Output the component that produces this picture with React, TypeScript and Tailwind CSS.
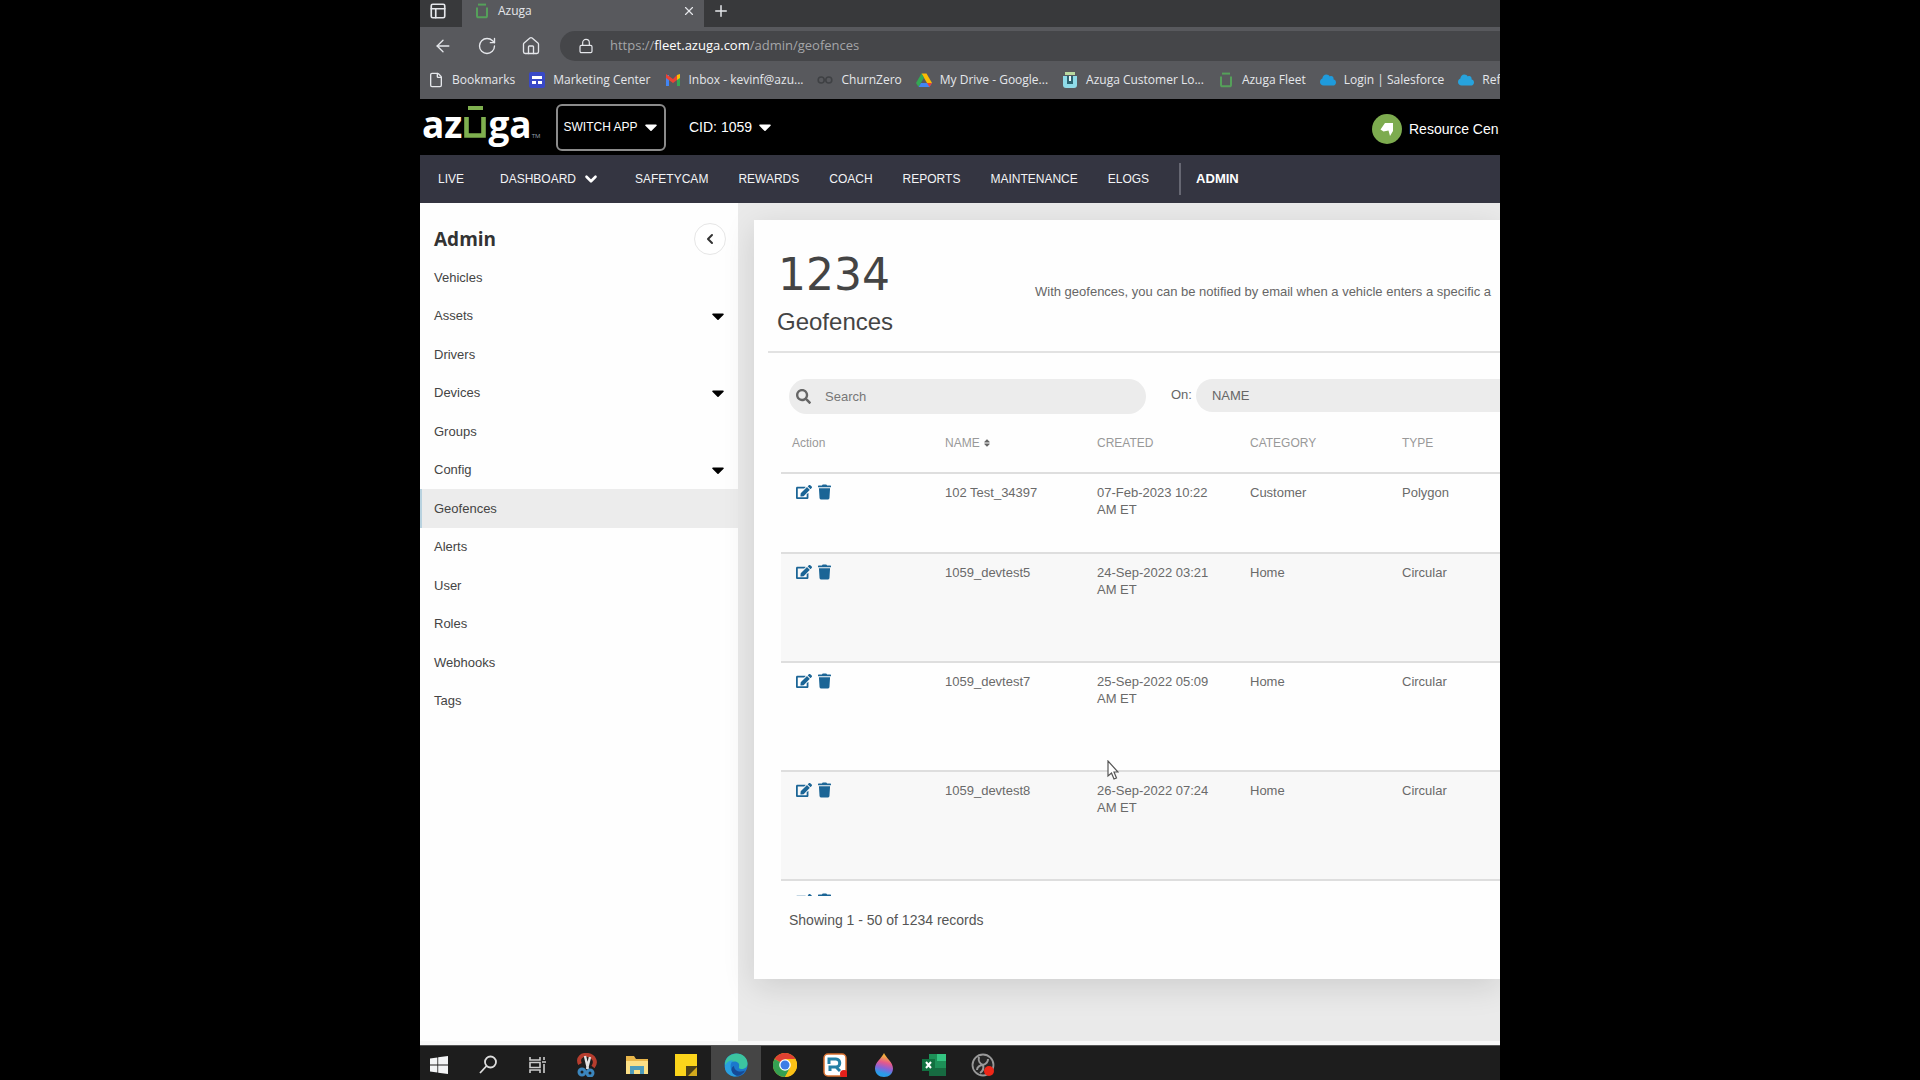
import type { ReactNode } from "react";
import { ArrowLeft, ChevronDown, ChevronLeft, File, House, Lock, PanelsTopLeft, Plus, RotateCw, X } from "lucide-react";
import { FaCaretDown, FaCloud, FaEdit, FaSearch, FaSort, FaTrash, FaWindows } from "react-icons/fa";

interface Geofence {
  name: string;
  date: string;
  zone: string;
  category: string;
  type: string;
  height: string;
}

const GEOFENCES: Geofence[] = [
  { name: "102 Test_34397", date: "07-Feb-2023 10:22", zone: "AM ET", category: "Customer", type: "Polygon", height: "h-20" },
  { name: "1059_devtest5", date: "24-Sep-2022 03:21", zone: "AM ET", category: "Home", type: "Circular", height: "h-[109px]" },
  { name: "1059_devtest7", date: "25-Sep-2022 05:09", zone: "AM ET", category: "Home", type: "Circular", height: "h-[109px]" },
  { name: "1059_devtest8", date: "26-Sep-2022 07:24", zone: "AM ET", category: "Home", type: "Circular", height: "h-[109px]" },
];

const MENU = [
  { label: "Vehicles" },
  { label: "Assets", expandable: true },
  { label: "Drivers" },
  { label: "Devices", expandable: true },
  { label: "Groups" },
  { label: "Config", expandable: true },
  { label: "Geofences", active: true },
  { label: "Alerts" },
  { label: "User" },
  { label: "Roles" },
  { label: "Webhooks" },
  { label: "Tags" },
];

const NAV = ["SAFETYCAM", "REWARDS", "COACH", "REPORTS", "MAINTENANCE", "ELOGS"];

function AzugaIcon({ color = "#55a05a" }: { color?: string }) {
  return (
    <svg className="w-4 h-4" viewBox="0 0 16 16" fill="none" stroke={color} strokeWidth="2">
      <path d="M4 1.6h8" />
      <path d="M3 4.5v8.2c0 1 .6 1.6 1.6 1.6h6.8c1 0 1.6-.6 1.6-1.6V4.5" />
    </svg>
  );
}

function CustomerIcon() {
  return (
    <svg className="w-4 h-4" viewBox="0 0 16 16">
      <path d="M3 0h10v3H3z" fill="#b9d9a0" />
      <path d="M1 4h14v9a3 3 0 0 1-3 3H4a3 3 0 0 1-3-3z" fill="#8fdbe8" />
      <path d="M5 4h6v8H5z" fill="#2d6672" />
      <path d="M7 4h2v5H7z" fill="#e8f6f8" />
    </svg>
  );
}

function MarketingIcon() {
  return (
    <svg className="w-4 h-4" viewBox="0 0 16 16">
      <rect width="16" height="16" rx="2" fill="#3949c6" />
      <path d="M3 4h10v3H3zM3 9h4v3H3zM9 9h4v3H9z" fill="#fff" />
    </svg>
  );
}

function GmailIcon() {
  return (
    <svg className="w-4 h-4" viewBox="0 0 16 16">
      <path d="M1 3h3v11H1z" fill="#4285f4" />
      <path d="M12 3h3v11h-3z" fill="#34a853" />
      <path d="M12 3l3-1v4l-3 2z" fill="#fbbc04" />
      <path d="M1 2l7 5 4-4v5l-4 3-7-5z" fill="#ea4335" />
    </svg>
  );
}

function ChurnIcon() {
  return (
    <svg className="w-4 h-4" viewBox="0 0 16 16" fill="none" stroke="#3f4144" strokeWidth="1.6">
      <circle cx="4.2" cy="8" r="3" />
      <circle cx="11.8" cy="8" r="3" />
    </svg>
  );
}

function DriveIcon() {
  return (
    <svg className="w-4 h-4" viewBox="0 0 16 16">
      <path d="M5.5 1.5h5L16 11h-5z" fill="#fbbc04" />
      <path d="M5.5 1.5L0 11l2.6 4L8 5.8z" fill="#34a853" />
      <path d="M5 11h11l-2.6 4H2.6z" fill="#4285f4" />
      <path d="M11 11h5l-2.6 4z" fill="#ea4335" />
    </svg>
  );
}

const BOOKMARKS: { label: string; icon: ReactNode }[] = [
  { label: "Bookmarks", icon: <File className="w-4 h-4" strokeWidth={2} /> },
  { label: "Marketing Center", icon: <MarketingIcon /> },
  { label: "Inbox - kevinf@azu...", icon: <GmailIcon /> },
  { label: "ChurnZero", icon: <ChurnIcon /> },
  { label: "My Drive - Google...", icon: <DriveIcon /> },
  { label: "Azuga Customer Lo...", icon: <CustomerIcon /> },
  { label: "Azuga Fleet", icon: <AzugaIcon /> },
  { label: "Login | Salesforce", icon: <FaCloud className="w-4 h-4 text-[#1f9bdc]" /> },
  { label: "Refr", icon: <FaCloud className="w-4 h-4 text-[#27a3dd]" /> },
];

function BrowserChrome() {
  return (
    <div className="shrink-0 bg-[#58595d] font-['Open_Sans',sans-serif] text-xs text-gray-200">
      <div className="flex h-[27px] bg-[#38393b]">
        <button aria-label="Tab actions" className="flex w-[42px] items-start justify-center pt-[2px] pr-[6px]">
          <PanelsTopLeft className="w-[18px] h-[18px]" strokeWidth={2.2} />
        </button>
        <div className="flex w-[242px] items-start gap-2 bg-[#58595d] pt-[3px] pl-3">
          <AzugaIcon />
          <span className="leading-4">Azuga</span>
          <button aria-label="Close tab" className="mr-2 ml-auto">
            <X className="w-[14px] h-4" />
          </button>
        </div>
        <button aria-label="New tab" className="flex items-start pt-[2px] pl-2">
          <Plus className="w-[18px] h-[18px]" />
        </button>
      </div>
      <div className="flex h-[38px] items-center">
        <div className="flex w-[140px] items-center gap-6 pl-[13px]">
          <button aria-label="Back"><ArrowLeft className="w-5 h-5" strokeWidth={1.6} /></button>
          <button aria-label="Reload"><RotateCw className="w-5 h-5" strokeWidth={1.6} /></button>
          <button aria-label="Home"><House className="w-5 h-5" strokeWidth={1.6} /></button>
        </div>
        <div className="flex h-[30px] flex-1 items-center gap-4 rounded-l-full bg-[#454649] pl-[18px]">
          <Lock className="w-4 h-4" strokeWidth={1.8} />
          <span className="text-[13px] whitespace-nowrap text-[#a4a5a8]">
            https://<span className="text-white">fleet.azuga.com</span>/admin/geofences
          </span>
        </div>
      </div>
      <div className="flex h-[34px] items-center gap-[14px] overflow-hidden pb-1 pl-2">
        {BOOKMARKS.map((b) => (
          <a key={b.label} href="#" className="flex shrink-0 items-center gap-2 whitespace-nowrap">
            {b.icon}
            {b.label}
          </a>
        ))}
      </div>
    </div>
  );
}

function AppHeader() {
  return (
    <header className="flex h-14 shrink-0 items-center overflow-hidden bg-black text-white">
      <a href="#" aria-label="Azuga" className="flex w-[136px] shrink-0 items-baseline pb-[6px] pl-[2px] font-['Open_Sans',sans-serif] text-[37px] font-bold">
        az
        <svg className="mx-[2px] h-[32px] w-[22px]" viewBox="0 0 22 32" fill="none" stroke="#7fb04f">
          <path d="M4 2h15" strokeWidth="4" />
          <path d="M2.5 11v18.500h17V11" strokeWidth="4.6" />
        </svg>
        ga
        <span className="text-[6px] font-normal text-gray-400">TM</span>
      </a>
      <button className="flex h-[47px] w-[110px] shrink-0 items-center justify-center gap-[5px] rounded-md border-2 border-[#8b8b8b] text-xs whitespace-nowrap">
        SWITCH APP
        <FaCaretDown className="w-4 h-5" />
      </button>
      <button className="ml-[23px] flex items-center gap-[5px] text-sm whitespace-nowrap">
        CID: 1059
        <FaCaretDown className="w-4 h-5" />
      </button>
      <a href="#" className="ml-auto flex w-32 shrink-0 items-center gap-[7px] pt-1 text-sm font-medium whitespace-nowrap">
        <svg className="h-[30px] w-[30px] shrink-0" viewBox="0 0 30 30">
          <circle cx="15" cy="15" r="15" fill="#7dab4f" />
          <path d="M13 9h8v8l-3 5-1.500-5.500-5 1-3-2z" fill="#fff" />
        </svg>
        Resource Cen
      </a>
    </header>
  );
}

function MainNav() {
  return (
    <nav className="flex h-12 shrink-0 items-center gap-[30px] bg-[#343541] pl-[18px] text-xs text-gray-100">
      <a href="#">LIVE</a>
      <a href="#" className="mr-[5px] ml-[6px] flex items-center gap-[6px]">
        DASHBOARD
        <ChevronDown className="w-[18px] h-[18px] text-white" strokeWidth={3.5} />
      </a>
      {NAV.map((item) => (
        <a key={item} href="#">{item}</a>
      ))}
      <a href="#" className="flex h-8 items-center border-l-2 border-[#666772] pl-[15px] text-[13px] font-bold text-white">ADMIN</a>
    </nav>
  );
}

function Sidebar() {
  return (
    <aside className="w-[318px] shrink-0 bg-[#fefefe] text-[13px] text-[#444]">
      <div className="flex h-[55px] items-center justify-between pt-4 pr-3 pl-[14px]">
        <h2 className="font-['Open_Sans',sans-serif] text-[19px] leading-6 font-bold text-[#333]">Admin</h2>
        <button aria-label="Collapse menu" className="flex h-8 w-8 items-center justify-center rounded-full border border-[#e6e6e6] bg-white">
          <ChevronLeft className="w-4 h-4 text-[#333]" strokeWidth={3} />
        </button>
      </div>
      <ul className="grid h-[462px] grid-rows-12">
        {MENU.map((item) => (
          <li key={item.label} className={item.active ? "border-l-2 border-[#b9d3e0] bg-[#ececec]" : "border-l-2 border-transparent"}>
            <a href="#" className="flex h-full items-center justify-between pr-3 pl-3">
              {item.label}
              {item.expandable && <FaCaretDown className="w-4 h-5 text-black" />}
            </a>
          </li>
        ))}
      </ul>
    </aside>
  );
}

function RowActions() {
  return (
    <div className="flex items-center gap-[6px] pl-1 text-[#1b6596]">
      <button aria-label="Edit"><FaEdit className="w-4 h-4" /></button>
      <button aria-label="Delete"><FaTrash className="w-[13px] h-4" /></button>
    </div>
  );
}

function GeofenceTable() {
  return (
    <table className="w-full table-fixed border-collapse text-left text-[13px] leading-[17px] text-[#6a6a6a]">
      <colgroup>
        <col className="w-[153px]" />
        <col className="w-[152px]" />
        <col className="w-[153px]" />
        <col className="w-[152px]" />
        <col />
      </colgroup>
      <thead>
        <tr className="h-[59px] border-b-2 border-[#dedede] text-xs text-[#999]">
          <th className="pl-[11px] font-normal">Action</th>
          <th className="pl-[11px] font-normal">
            <span className="flex items-center gap-1">NAME <FaSort className="w-[6px] text-[#666]" /></span>
          </th>
          <th className="pl-[11px] font-normal">CREATED</th>
          <th className="pl-[11px] font-normal">CATEGORY</th>
          <th className="pl-[11px] font-normal">TYPE</th>
        </tr>
      </thead>
      <tbody>
        {GEOFENCES.map((g) => (
          <tr key={g.name} className={`${g.height} border-b-2 border-[#dedede] align-top even:bg-[#f8f8f8]`}>
            <td className="pt-[10px] pl-[11px]"><RowActions /></td>
            <td className="pt-[10px] pl-[11px]">{g.name}</td>
            <td className="pt-[10px] pl-[11px] whitespace-nowrap">{g.date}<br />{g.zone}</td>
            <td className="pt-[10px] pl-[11px]">{g.category}</td>
            <td className="pt-[10px] pl-[11px]">{g.type}</td>
          </tr>
        ))}
        <tr className="h-20 align-top">
          <td className="pt-3 pl-[11px]"><RowActions /></td>
        </tr>
      </tbody>
    </table>
  );
}

function GeofencesCard() {
  return (
    <section className="mt-[17px] mb-[62px] ml-4 flex min-w-0 flex-1 flex-col bg-[#fefefe] shadow-[0_8px_30px_rgba(0,0,0,0.12)]">
      <div className="ml-[14px] flex h-[133px] shrink-0 items-center border-b-2 border-[#e2e2e2] pt-5 pl-[9px] text-[#444]">
        <h1 className="w-[258px] shrink-0 font-normal">
          <span className="block pl-[1px] font-['DejaVu_Sans',sans-serif] text-[44px] leading-[52px]">1234</span>
          <span className="block text-2xl leading-[42px]">Geofences</span>
        </h1>
        <p className="flex-1 pb-2 text-[13px] whitespace-nowrap text-[#666]">
          With geofences, you can be notified by email when a vehicle enters a specific a
        </p>
      </div>
      <div className="flex shrink-0 items-start pt-[26px] pl-[35px] text-[13px] text-[#666]">
        <label className="flex h-[35px] w-[357px] shrink-0 items-center gap-[14px] rounded-full bg-[#ececec] pl-[7px]">
          <FaSearch className="w-[15px] h-[15px]" />
          <input aria-label="Search" placeholder="Search" className="w-72 bg-transparent outline-none placeholder:text-[#777]" />
        </label>
        <label htmlFor="on" className="ml-[25px] leading-[32px]">On:</label>
        <select id="on" className="ml-1 h-[33px] flex-1 appearance-none rounded-l-full bg-[#ececec] pl-4">
          <option>NAME</option>
        </select>
      </div>
      <div className="ml-[27px] min-h-0 flex-1 overflow-hidden">
        <GeofenceTable />
      </div>
      <p className="h-[83px] shrink-0 pt-[14px] pl-[35px] text-sm text-[#555]">Showing 1 - 50 of 1234 records</p>
    </section>
  );
}

const TASKS: { label: string; icon: ReactNode }[] = [
  { label: "Start", icon: <FaWindows className="w-[18px] h-6 text-gray-100" /> },
  {
    label: "Search",
    icon: (
      <svg className="w-6 h-6" viewBox="0 0 24 24" fill="none" stroke="#ddd" strokeWidth="1.8">
        <circle cx="14.500" cy="9" r="5.500" />
        <path d="M10.500 13L4 20" />
      </svg>
    ),
  },
  {
    label: "Task view",
    icon: (
      <svg className="w-6 h-6" viewBox="0 0 24 24" fill="none" stroke="#ccc" strokeWidth="1.6">
        <path d="M4 4v3h10V4M4 20v-3h10v3M4 9.500h10v5H4zM18 4v3M18 11v9M16 9h4" />
      </svg>
    ),
  },
  {
    label: "Snip",
    icon: (
      <svg className="w-6 h-6" viewBox="0 0 24 24" fill="none">
        <path d="M5 11C2 5 7 1 13 2c6 1 9 7 5 12" stroke="#b63d2e" strokeWidth="4" />
        <path d="M10 3l3 13M15 4l-3 12" stroke="#e3e3e3" strokeWidth="2.400" />
        <circle cx="7" cy="19" r="3" stroke="#3b86bd" strokeWidth="3" />
        <circle cx="15" cy="20" r="3" stroke="#3b86bd" strokeWidth="3" />
      </svg>
    ),
  },
  {
    label: "Files",
    icon: (
      <svg className="w-6 h-6" viewBox="0 0 24 24">
        <path d="M1 3h8l2 3h12v15H1z" fill="#e9b64a" />
        <path d="M1 8h22v13H1z" fill="#fbdf86" />
        <path d="M5 13h14v8h-4v-4H9v4H5z" fill="#4e9cbb" />
      </svg>
    ),
  },
  {
    label: "Notes",
    icon: (
      <svg className="w-6 h-6" viewBox="0 0 24 24">
        <path d="M1 1h22v22H1z" fill="#fcd51b" />
        <path d="M12 13h11v10H12z" fill="#4d4118" />
        <path d="M14 23l9-9v9z" fill="#d3a91c" />
      </svg>
    ),
  },
  {
    label: "Edge",
    icon: (
      <svg className="w-6 h-6" viewBox="0 0 24 24">
        <circle cx="12" cy="12" r="11.500" fill="#1b78cd" />
        <path d="M1 10C2 4 7 .5 12.500.5 19 .5 23.500 5 23.500 10.500c0 4-3 5.500-6 5.500-2.500 0-3-1-2.500-2.500.8-2.500-1-5-4.500-5C6 8.500 3 10 1 13z" fill="#3cc4a0" />
        <path d="M1 13c1-4 5-6 8.500-5.500C7 9 6 12 7 16c1 4 4 6.500 7 7C7 25 0 20 1 13z" fill="#2a9fe0" />
        <path d="M10 13c0 5 6 7 11 4.500-2 4-6 6-9 5-5-2-6-8-2-9.500z" fill="#164a96" />
      </svg>
    ),
  },
  {
    label: "Chrome",
    icon: (
      <svg className="w-6 h-6" viewBox="0 0 24 24">
        <circle cx="12" cy="12" r="12" fill="#fbc116" />
        <path d="M12 12L1.600 6A12 12 0 0 1 22.400 6z" fill="#df4132" />
        <path d="M12 12L1.600 6A12 12 0 0 0 12 24l5-9z" fill="#35a052" />
        <path d="M12 6h10.400A12 12 0 0 1 12 24l5-9z" fill="#fbc116" />
        <circle cx="12" cy="12" r="5.800" fill="#fff" />
        <circle cx="12" cy="12" r="4.500" fill="#3d7de6" />
      </svg>
    ),
  },
  {
    label: "Recorder",
    icon: (
      <svg className="w-6 h-6" viewBox="0 0 24 24">
        <rect x="1" y="1" width="22" height="22" rx="4" fill="#fff" stroke="#d9702e" strokeWidth="1.500" />
        <path d="M7 18v-4h6c5 0 5-8 0-8H6v5M13 14l4 4" fill="none" stroke="#2580a5" strokeWidth="3" />
        <circle cx="21" cy="21" r="4" fill="#e3201b" />
      </svg>
    ),
  },
  {
    label: "Paint",
    icon: (
      <svg className="w-6 h-6" viewBox="0 0 24 24">
        <defs>
          <linearGradient id="drop" x1="0.600" y1="0" x2="0.400" y2="1">
            <stop offset="0.120" stopColor="#f3b13c" />
            <stop offset="0.400" stopColor="#e4588c" />
            <stop offset="0.620" stopColor="#8d62d6" />
            <stop offset="0.850" stopColor="#2a9ce8" />
          </linearGradient>
        </defs>
        <path d="M12 0c2 5 9 9 9 15.500 0 5-4 8.500-9 8.500s-9-3.500-9-8.500C3 9 10 5 12 0z" fill="url(#drop)" />
      </svg>
    ),
  },
  {
    label: "Excel",
    icon: (
      <svg className="w-6 h-6" viewBox="0 0 24 24">
        <path d="M7 1h17v22H7z" fill="#1d9057" />
        <path d="M15 1h9v7h-9z" fill="#34c481" />
        <path d="M7 15h17v8H7z" fill="#176b41" />
        <path d="M0 6h13v12H0z" fill="#127040" />
        <path d="M4 9l5 6M9 9l-5 6" stroke="#fff" strokeWidth="2" />
      </svg>
    ),
  },
  {
    label: "OBS",
    icon: (
      <svg className="w-6 h-6" viewBox="0 0 24 24" fill="none">
        <circle cx="12" cy="12" r="10.500" stroke="#999" strokeWidth="1.800" fill="#262626" />
        <path d="M8 4c-1 4 1 7 4 8 3-1 5-3 5-6M12 12c-3 0-6 2-6 5M12 12c1 3 0 6-3 8" stroke="#999" strokeWidth="2" />
        <circle cx="18" cy="18" r="5" fill="#ee2718" />
      </svg>
    ),
  },
];

function Taskbar() {
  return (
    <footer className="h-[35px] shrink-0 overflow-hidden border-t border-[#555] bg-[#1d1d1d]">
      <div className="-ml-[6px] grid h-full w-[594px] grid-cols-12">
        {TASKS.map((t) => (
          <button
            key={t.label}
            aria-label={t.label}
            className={`flex items-start justify-center pt-[7px] ${t.label === "Edge" ? "bg-[#454545]" : ""}`}
          >
            {t.icon}
          </button>
        ))}
      </div>
    </footer>
  );
}

export default function App() {
  return (
    <div className="flex h-screen justify-center overflow-hidden bg-black font-['Liberation_Sans',Arial,sans-serif]">
      <div className="relative flex w-[56.25%] flex-col overflow-hidden">
        <BrowserChrome />
        <AppHeader />
        <MainNav />
        <main className="flex min-h-0 flex-1 overflow-hidden border-b-4 border-[#f8f8f8] bg-[#eaeaea]">
          <Sidebar />
          <GeofencesCard />
        </main>
        <Taskbar />

        {/* Mouse pointer, floats over the table */}
        <svg className="pointer-events-none absolute top-[760px] left-[687px] h-5 w-3" viewBox="0 0 12 20">
          <path d="M1 1v15l3.500-3 2.500 6 2.500-1-2.500-6H11z" fill="#fff" stroke="#555" strokeWidth="1.200" />
        </svg>
      </div>
    </div>
  );
}
